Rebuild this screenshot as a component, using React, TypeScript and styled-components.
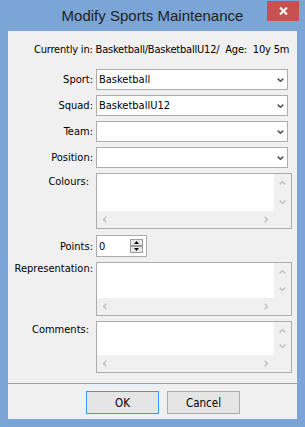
import React from 'react';
import styled, { createGlobalStyle } from 'styled-components';

const GlobalStyle = createGlobalStyle`
  html, body {
    margin: 0;
    padding: 0;
  }
  body {
    width: 305px;
    height: 427px;
    overflow: hidden;
    background: #7ba4d7;
  }
`;

const Window = styled.div`
  width: 305px;
  height: 427px;
  box-sizing: border-box;
  padding: 0 8px 8px 8px;
  background: #7ba4d7;
  display: flex;
  flex-direction: column;
`;

const TitleBar = styled.div`
  height: 31px;
  flex: none;
  display: grid;
  grid-template-columns: 1fr auto 1fr;
`;

const Title = styled.div`
  grid-column: 2;
  font-family: "Liberation Sans", Arial, sans-serif;
  font-size: 15px;
  line-height: 31px;
  color: #222;
  white-space: nowrap;
`;

const CloseButton = styled.div`
  grid-column: 3;
  justify-self: end;
  align-self: start;
  margin-top: 1px;
  margin-right: -2px;
  width: 32px;
  height: 20px;
  background: #c75050;
  display: flex;
  align-items: center;
  justify-content: center;
`;

const Client = styled.div`
  flex: 1;
  background: #f0f0f0;
  display: flex;
  flex-direction: column;
  font-family: "DejaVu Sans Condensed", "DejaVu Sans", sans-serif;
  font-stretch: condensed;
  font-size: 11px;
  color: #000;
`;

const InfoLine = styled.div`
  padding: 11px 0 0 26px;
  height: 16px;
  line-height: 16px;
  letter-spacing: -0.2px;
  white-space: pre;
`;

const Form = styled.div`
  flex: 1;
  padding: 11px 5px 0 0;
  display: flex;
  flex-direction: column;
`;

const Row = styled.div<{ $gap?: number; $area?: boolean }>`
  display: grid;
  grid-template-columns: 88px 1fr;
  align-items: ${(p) => (p.$area ? 'start' : 'center')};
  margin-top: ${(p) => p.$gap ?? 0}px;
`;

const Label = styled.div<{ $pad?: number; $top?: number }>`
  text-align: right;
  padding-right: ${(p) => p.$pad ?? 3}px;
  margin-top: ${(p) => p.$top ?? 0}px;
  line-height: 13px;
  white-space: nowrap;
`;

const Combo = styled.div`
  height: 21px;
  margin-right: 4px;
  box-sizing: border-box;
  border: 1px solid #acacac;
  background: #fff;
  display: flex;
  align-items: center;
  padding: 0 3px 0 2px;
`;

const FieldText = styled.span`
  flex: 1;
  line-height: 13px;
`;

const Chevron = ({ dir, color, w = 7, h = 4 }: { dir: 'up' | 'down' | 'left' | 'right'; color: string; w?: number; h?: number }) => {
  const horiz = dir === 'left' || dir === 'right';
  const W = horiz ? h : w;
  const H = horiz ? w : h;
  let pts = '';
  if (dir === 'down') pts = `0.7,0.7 ${W / 2},${H - 0.7} ${W - 0.7},0.7`;
  if (dir === 'up') pts = `0.7,${H - 0.7} ${W / 2},0.7 ${W - 0.7},${H - 0.7}`;
  if (dir === 'left') pts = `${W - 0.7},0.7 0.7,${H / 2} ${W - 0.7},${H - 0.7}`;
  if (dir === 'right') pts = `0.7,0.7 ${W - 0.7},${H / 2} 0.7,${H - 0.7}`;
  return (
    <svg width={W} height={H} viewBox={`0 0 ${W} ${H}`} style={{ display: 'block' }}>
      <polyline points={pts} fill="none" stroke={color} strokeWidth={1.6} />
    </svg>
  );
};

const TextBox = styled.div<{ $h: number }>`
  height: ${(p) => p.$h}px;
  box-sizing: border-box;
  border: 1px solid #acacac;
  background: #f0f0f0;
  display: grid;
  grid-template-columns: 1fr 17px;
  grid-template-rows: 1fr 17px;
`;

const TextArea = styled.div`
  background: #fff;
`;

const VScroll = styled.div`
  display: flex;
  flex-direction: column;
  justify-content: space-between;
  align-items: center;
  padding: 7px 0;
`;

const HScroll = styled.div`
  display: flex;
  justify-content: space-between;
  align-items: center;
  padding: 0 6px;
`;

const Spinner = styled.div`
  width: 51px;
  height: 22px;
  box-sizing: border-box;
  border: 1px solid #acacac;
  background: #fff;
  display: flex;
  align-items: center;
  padding: 0 3px 0 2px;
`;

const SpinButtons = styled.div`
  display: flex;
  flex-direction: column;
  margin-top: -1px;
`;

const SpinButton = styled.div`
  width: 13px;
  height: 7px;
  box-sizing: border-box;
  border: 1px solid #9c9c9c;
  background: #e8e8e8;
  display: flex;
  align-items: center;
  justify-content: center;
`;

const Divider = styled.div`
  height: 1px;
  background: #a0a0a0;
`;

const ButtonBar = styled.div`
  display: flex;
  gap: 8px;
  padding: 7px 0 5px 78px;
`;

const Button = styled.div<{ $default?: boolean }>`
  width: 73px;
  height: 23px;
  box-sizing: border-box;
  border: 1px solid ${(p) => (p.$default ? '#3399ff' : '#adadad')};
  background: #e5e5e5;
  display: flex;
  align-items: center;
  justify-content: center;
  font-size: 11.5px;
`;

const ComboField = ({ value }: { value?: string }) => (
  <Combo>
    <FieldText>{value}</FieldText>
    <Chevron dir="down" color="#555" w={7} h={4} />
  </Combo>
);

const AreaField = ({ h }: { h: number }) => (
  <TextBox $h={h}>
    <TextArea />
    <VScroll>
      <Chevron dir="up" color="#c4c4c4" />
      <Chevron dir="down" color="#c4c4c4" />
    </VScroll>
    <HScroll>
      <Chevron dir="left" color="#c4c4c4" />
      <Chevron dir="right" color="#c4c4c4" />
    </HScroll>
    <div />
  </TextBox>
);

const Triangle = ({ up }: { up?: boolean }) => (
  <svg width="5" height="3" viewBox="0 0 5 3" style={{ display: 'block' }}>
    <polygon points={up ? '0,3 2.5,0 5,3' : '0,0 2.5,3 5,0'} fill="#000" />
  </svg>
);

const App = () => {
  return (
    <Window>
      <GlobalStyle />
      <TitleBar>
        <Title>Modify Sports Maintenance</Title>
        <CloseButton>
          <svg width="9" height="8" viewBox="0 0 9 8">
            <path d="M1 0.5 L8 7.5 M8 0.5 L1 7.5" stroke="#fff" strokeWidth="2" />
          </svg>
        </CloseButton>
      </TitleBar>
      <Client>
        <InfoLine>{'Currently in: Basketball/BasketballU12/  Age:  10y 5m'}</InfoLine>
        <Form>
          <Row>
            <Label>Sport:</Label>
            <ComboField value="Basketball" />
          </Row>
          <Row $gap={5}>
            <Label>Squad:</Label>
            <ComboField value="BasketballU12" />
          </Row>
          <Row $gap={5}>
            <Label>Team:</Label>
            <ComboField />
          </Row>
          <Row $gap={5}>
            <Label>Position:</Label>
            <ComboField />
          </Row>
          <Row $gap={5} $area>
            <Label $pad={7} $top={2}>Colours:</Label>
            <AreaField h={56} />
          </Row>
          <Row $gap={6}>
            <Label>Points:</Label>
            <Spinner>
              <FieldText>0</FieldText>
              <SpinButtons>
                <SpinButton><Triangle up /></SpinButton>
                <SpinButton><Triangle /></SpinButton>
              </SpinButtons>
            </Spinner>
          </Row>
          <Row $gap={5} $area>
            <Label $top={0}>Representation:</Label>
            <AreaField h={54} />
          </Row>
          <Row $gap={5} $area>
            <Label $pad={7} $top={2}>Comments:</Label>
            <AreaField h={52} />
          </Row>
        </Form>
        <Divider />
        <ButtonBar>
          <Button $default>OK</Button>
          <Button>Cancel</Button>
        </ButtonBar>
      </Client>
    </Window>
  );
};

export default App;
